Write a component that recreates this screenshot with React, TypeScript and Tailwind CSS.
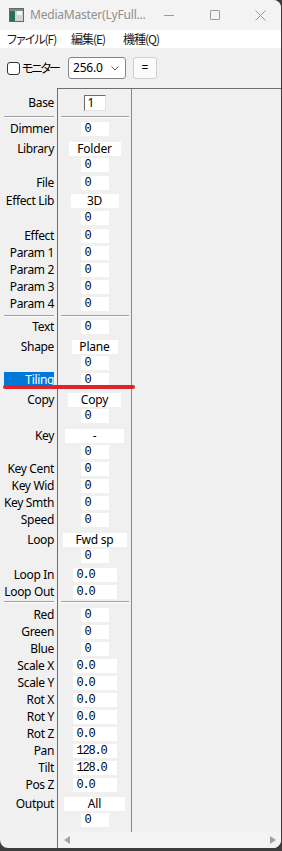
import React from "react";

type Row =
  | { kind: "sep"; mt: number }
  | { kind: "base" | "int" | "float" | "combo"; label?: string; val?: string; w?: string; mt: number; hl?: boolean };

const MT: Record<number, string> = {
  0: "",
  1: "mt-px",
  2: "mt-0.5",
  3: "mt-[3px]",
  4: "mt-1",
  5: "mt-[5px]",
};

const rows: Row[] = [
  { kind: "base", label: "Base", val: "1", mt: 0 },
  { kind: "sep", mt: 5 },
  { kind: "int", label: "Dimmer", mt: 3 },
  { kind: "combo", label: "Library", val: "Folder", w: "w-[52px]", mt: 4 },
  { kind: "int", mt: 0 },
  { kind: "int", label: "File", mt: 2 },
  { kind: "combo", label: "Effect Lib", val: "3D", w: "w-[48px]", mt: 2 },
  { kind: "int", mt: 1 },
  { kind: "int", label: "Effect", mt: 2 },
  { kind: "int", label: "Param 1", mt: 1 },
  { kind: "int", label: "Param 2", mt: 1 },
  { kind: "int", label: "Param 3", mt: 1 },
  { kind: "int", label: "Param 4", mt: 1 },
  { kind: "sep", mt: 3 },
  { kind: "int", label: "Text", mt: 2 },
  { kind: "combo", label: "Shape", val: "Plane", w: "w-[46px]", mt: 4 },
  { kind: "int", mt: 0 },
  { kind: "int", label: "Tiling", mt: 1, hl: true },
  { kind: "combo", label: "Copy", val: "Copy", w: "w-[53px]", mt: 4 },
  { kind: "int", mt: 0 },
  { kind: "combo", label: "Key", val: "-", w: "w-[59px]", mt: 4 },
  { kind: "int", mt: 0 },
  { kind: "int", label: "Key Cent", mt: 1 },
  { kind: "int", label: "Key Wid", mt: 1 },
  { kind: "int", label: "Key Smth", mt: 1 },
  { kind: "int", label: "Speed", mt: 1 },
  { kind: "combo", label: "Loop", val: "Fwd sp", w: "w-[64px]", mt: 4 },
  { kind: "int", mt: 0 },
  { kind: "float", label: "Loop In", mt: 3 },
  { kind: "float", label: "Loop Out", mt: 1 },
  { kind: "sep", mt: 1 },
  { kind: "int", label: "Red", mt: 4 },
  { kind: "int", label: "Green", mt: 1 },
  { kind: "int", label: "Blue", mt: 1 },
  { kind: "float", label: "Scale X", mt: 1 },
  { kind: "float", label: "Scale Y", mt: 1 },
  { kind: "float", label: "Rot X", mt: 1 },
  { kind: "float", label: "Rot Y", mt: 1 },
  { kind: "float", label: "Rot Z", mt: 1 },
  { kind: "float", label: "Pan", val: "128.0", mt: 1 },
  { kind: "float", label: "Tilt", val: "128.0", mt: 1 },
  { kind: "float", label: "Pos Z", mt: 1 },
  { kind: "combo", label: "Output", val: "All", w: "w-[61px]", mt: 3 },
  { kind: "int", mt: 0 },
];

const sans = "font-['Noto_Sans','Open_Sans',sans-serif]";
const mono = "font-['Liberation_Mono',monospace]";
const jp = "font-['Noto_Sans_CJK_JP',sans-serif] [font-feature-settings:'palt']";

function LabelCell({ r }: { r: Row }) {
  if (r.kind === "sep") {
    return <div className={`${MT[r.mt]} ml-1 w-[50px] h-[2px] border-t border-[#a0a0a0] border-b border-b-white`} />;
  }
  return (
    <div
      className={`${MT[r.mt]} ml-1 w-[50px] h-4 flex items-center justify-end whitespace-nowrap text-[12px] tracking-[-0.35px] leading-none ${
        r.hl ? "bg-[#0078d7] text-white" : "text-black"
      }`}
    >
      <span className="whitespace-nowrap">{r.label ?? ""}</span>
    </div>
  );
}

function ValueCell({ r }: { r: Row }) {
  if (r.kind === "sep") {
    return <div className={`${MT[r.mt]} ml-[3px] w-[68px] h-[2px] border-t border-[#a0a0a0] border-b border-b-white`} />;
  }
  let inner: React.ReactNode = null;
  if (r.kind === "base") {
    inner = (
      <div className={`w-[22px] h-4 bg-white border-l border-t border-[#6a6a6a] border-r border-b border-r-[#e3e3e3] border-b-[#e3e3e3] flex items-center pl-[3px] text-[12px] leading-none text-black ${sans}`}>
        {r.val}
      </div>
    );
  } else if (r.kind === "int") {
    inner = (
      <div className={`w-[28px] h-[14px] bg-white flex items-center pl-1 text-[12px] tracking-[-1.2px] leading-none text-black ${mono}`}>
        {r.val ?? "0"}
      </div>
    );
  } else if (r.kind === "float") {
    inner = (
      <div className={`w-[44px] h-[14px] bg-white flex items-center pl-1 text-[12px] tracking-[-1.2px] leading-none text-black ${mono}`}>
        {r.val ?? "0.0"}
      </div>
    );
  } else {
    inner = (
      <div className={`${r.w} h-[14px] bg-white flex items-center justify-center whitespace-nowrap text-[12px] tracking-[-0.2px] leading-none text-black ${sans}`}>
        {r.val}
      </div>
    );
  }
  return <div className={`${MT[r.mt]} h-4 flex items-center justify-center`}>{inner}</div>;
}

export default function App() {
  return (
    <div className={`w-[282px] h-[851px] bg-[#3c3c3c] ${sans}`}>
      <div className="relative w-[281px] h-[848px] bg-[#f0f0f0] rounded-tr-[8px] rounded-b-[8px] overflow-hidden flex flex-col">
        {/* Title bar */}
        <div className="h-[30px] bg-[#f3f3f3] flex items-center shrink-0">
          <div className="ml-[9px] w-[15px] h-[14px]">
            <svg width="15" height="14" viewBox="0 0 15 14">
              <rect x="0.5" y="0.5" width="14" height="13" fill="#cfd6d4" stroke="#5a6b68" />
              <rect x="1" y="1" width="5" height="12" fill="#2f6b5e" />
              <rect x="8" y="3" width="5" height="4" fill="#f4f4f4" />
              <rect x="1" y="1" width="13" height="2" fill="#7d8c89" />
            </svg>
          </div>
          <div className="ml-[6px] text-[12px] tracking-[-0.2px] text-[#8f8f8f] leading-none whitespace-nowrap">MediaMaster(LyFull...</div>
          <div className="ml-auto flex h-full">
            <div className="w-[46px] h-full flex items-center justify-center">
              <div className="w-[10px] h-px bg-[#9a9a9a]" />
            </div>
            <div className="w-[46px] h-full flex items-center justify-center">
              <div className="w-[10px] h-[10px] border border-[#9a9a9a] rounded-[1px]" />
            </div>
            <div className="w-[46px] h-full flex items-center justify-center">
              <svg width="11" height="11" viewBox="0 0 11 11">
                <path d="M0.5 0.5 L10.5 10.5 M10.5 0.5 L0.5 10.5" stroke="#9a9a9a" strokeWidth="1" />
              </svg>
            </div>
          </div>
        </div>
        {/* Menu bar */}
        <div className={`h-[18px] bg-white flex items-center shrink-0 text-[12px] tracking-[-1px] text-[#1a1a1a] leading-none whitespace-nowrap ${jp}`}>
          <span className="ml-[7px] w-[64px]">ファイル(F)</span>
          <span className="w-[52px]">編集(E)</span>
          <span>機種(Q)</span>
        </div>
        {/* Toolbar */}
        <div className="h-[40px] flex items-center shrink-0 pl-[7px]">
          <div className="w-[61px] flex items-center">
            <div className="w-[13px] h-[13px] border border-[#333] rounded-[3px] bg-white" />
            <span className={`ml-[2px] text-[12px] tracking-[-2px] leading-none text-black whitespace-nowrap ${jp}`}>モニター</span>
          </div>
          <div className="w-[58px] h-[22px] border border-[#868686] rounded-[3px] bg-white flex items-center pl-[4px] pr-[6px]">
            <span className="text-[12px] leading-none text-black tracking-[-0.2px]">256.0</span>
            <svg className="ml-auto" width="8" height="5" viewBox="0 0 8 5">
              <path d="M0.5 0.5 L4 4 L7.5 0.5" fill="none" stroke="#555" strokeWidth="1" />
            </svg>
          </div>
          <div className="ml-[7px] w-[24px] h-[22px] border border-[#d0d0d0] rounded-[3px] bg-[#fbfbfb] flex items-center justify-center text-[12px] leading-none text-black">
            =
          </div>
        </div>
        {/* Body */}
        <div className="flex-1 flex min-h-0">
          <div className="w-[57px] pt-[7px] flex flex-col">
            {rows.map((r, i) => (
              <LabelCell key={i} r={r} />
            ))}
          </div>
          <div className="flex-1 flex flex-col border-t border-l border-[#6e6e6e]">
            <div className="flex-1 flex min-h-0">
              <div className="w-[74px] border-r border-[#8a8a8a] pt-1.5 flex flex-col">
                {rows.map((r, i) => (
                  <ValueCell key={i} r={r} />
                ))}
              </div>
              <div className="flex-1" />
            </div>
            <div className="h-[16px] bg-[#f3f3f3] flex items-center justify-between pl-[6px] pr-[5px]">
              <svg width="6" height="8" viewBox="0 0 6 8">
                <path d="M6 0 L0 4 L6 8 Z" fill="#a3a3a3" />
              </svg>
              <svg width="6" height="8" viewBox="0 0 6 8">
                <path d="M0 0 L6 4 L0 8 Z" fill="#a3a3a3" />
              </svg>
            </div>
          </div>
        </div>
        {/* annotation red line */}
        <div className="absolute left-[3px] top-[385px] w-[132px] h-[4px] rounded-full bg-[#e0232b]" />
      </div>
    </div>
  );
}
